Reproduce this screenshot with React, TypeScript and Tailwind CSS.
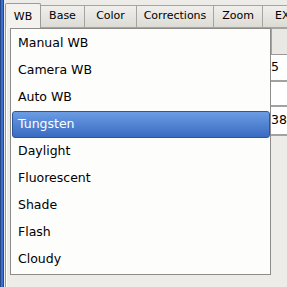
import React from "react";

const tabs = [
  { label: "Base", w: "w-[44px]" },
  { label: "Color", w: "w-[52px]" },
  { label: "Corrections", w: "w-[77px]" },
  { label: "Zoom", w: "w-[49px]" },
  { label: "EXIF", w: "w-[49px]" },
];

const presets = [
  "Manual WB",
  "Camera WB",
  "Auto WB",
  "Tungsten",
  "Daylight",
  "Fluorescent",
  "Shade",
  "Flash",
  "Cloudy",
];

export default function App() {
  const selected = "Tungsten";

  return (
    <div className="relative flex h-[287px] w-[287px] overflow-hidden bg-[#edece9] font-['DejaVu_Sans',sans-serif] text-black">
      {/* window edge */}
      <div className="w-[4px] shrink-0 border-x border-[#22488b] bg-[#3d6fd1]" />

      <div className="flex min-w-0 flex-1 flex-col pl-[1px]">
        {/* Tab strip */}
        <div className="flex h-[28px] shrink-0 items-end">
          <div className="flex h-[25px] w-[36px] shrink-0 items-start justify-center rounded-t-[2px] border-x border-t border-[#9d9b97] bg-[#f3f2ef] pt-[5px] text-[11px]">
            WB
          </div>
          {tabs.map((t) => (
            <div
              key={t.label}
              className={`flex h-[23px] ${t.w} shrink-0 items-center justify-center border border-l-0 border-[#a6a4a0] bg-gradient-to-b from-[#f0efec] to-[#dddbd6] text-[11px] whitespace-nowrap`}
            >
              {t.label}
            </div>
          ))}
        </div>

        {/* Tab page */}
        <div className="flex flex-1 border-l border-[#9d9b97] pl-[265px] shadow-[inset_1px_0_0_#ffffff]">
          <div className="flex w-[40px] shrink-0 flex-col text-[12.5px]">
            <div className="h-[26px] border-t border-l border-[#a5a4a0] bg-[#e9e8e5]" />
            <div className="flex h-[26px] items-center border-t border-[#9a9996] bg-white">5</div>
            <div className="h-[25px] border-t-2 border-[#a3a29f] bg-white" />
            <div className="flex h-[29px] items-center border-t-2 border-[#a3a29f] bg-white">38</div>
            <div className="h-[2px] bg-[#a3a29f]" />
          </div>
        </div>
      </div>

      {/* Dropdown list */}
      <div className="absolute left-[10px] top-[28px] w-[261px] border border-[#8d8c89] bg-[#fdfdfc] py-[1px] text-[12.5px]">
        {presets.map((p) =>
          p === selected ? (
            <div
              key={p}
              className="ml-[1px] flex h-[27px] items-center rounded-[3px] border border-[#2d5597] bg-gradient-to-b from-[#6b9ce3] to-[#3b6bc1] pl-[5px] text-white"
            >
              {p}
            </div>
          ) : (
            <div key={p} className="flex h-[27px] items-center pl-[7px]">
              {p}
            </div>
          )
        )}
      </div>
    </div>
  );
}
